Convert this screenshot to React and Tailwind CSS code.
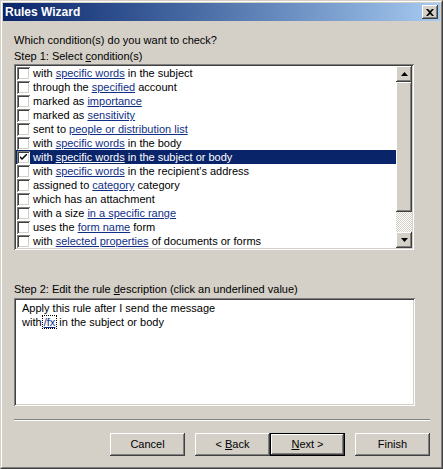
import React from 'react';

const raised =
  'shadow-[inset_-1px_-1px_#404040,inset_1px_1px_#ffffff,inset_-2px_-2px_#808080,inset_2px_2px_#d4d0c8]';
const sunken =
  'shadow-[inset_1px_1px_#808080,inset_-1px_-1px_#ffffff,inset_2px_2px_#404040,inset_-2px_-2px_#d4d0c8]';

const conditions = [
  ['with ', 'specific words', ' in the subject'],
  ['through the ', 'specified', ' account'],
  ['marked as ', 'importance', ''],
  ['marked as ', 'sensitivity', ''],
  ['sent to ', 'people or distribution list', ''],
  ['with ', 'specific words', ' in the body'],
  ['with ', 'specific words', ' in the subject or body'],
  ['with ', 'specific words', " in the recipient's address"],
  ['assigned to ', 'category', ' category'],
  ['which has an attachment', '', ''],
  ['with a size ', 'in a specific range', ''],
  ['uses the ', 'form name', ' form'],
  ['with ', 'selected properties', ' of documents or forms'],
];

const Checkbox = ({ checked }) => (
  <div className={`w-[13px] h-[13px] shrink-0 bg-white ${sunken} flex items-center justify-center`}>
    {checked && (
      <svg width="7" height="7" viewBox="0 0 7 7">
        <path d="M0 2 L0 4 L2 6 L7 1 L7 -1 L2 4 Z" fill="#000" />
      </svg>
    )}
  </div>
);

const Button = ({ children, isDefault }) => (
  <button
    type="button"
    className={`w-[75px] h-[23px] bg-[#d4d0c8] text-[11px] text-black flex items-center justify-center ${
      isDefault ? 'border border-black' : ''
    }`}
  >
    <span className={`w-full h-full flex items-center justify-center ${raised}`}>{children}</span>
  </button>
);

const Arrow = ({ up }) => (
  <svg width="7" height="4" viewBox="0 0 7 4">
    <path d={up ? 'M3.5 0 L7 4 L0 4 Z' : 'M0 0 L7 0 L3.5 4 Z'} fill="#000" />
  </svg>
);

export default function App() {
  return (
    <div className="w-[443px] h-[469px] font-['Liberation_Sans',Arial,sans-serif] text-[11px] text-black">
      {/* window frame */}
      <div className="w-full h-full bg-[#d4d0c8] border border-t-[#d4d0c8] border-l-[#d4d0c8] border-r-[#404040] border-b-[#404040]">
        <div className="w-full h-full border border-t-white border-l-white border-r-[#808080] border-b-[#808080] p-px flex flex-col">
          {/* Title bar */}
          <div className="h-[18px] shrink-0 bg-gradient-to-r from-[#0a246a] to-[#a6caf0] flex items-center justify-between pl-[2px] pr-[2px]">
            <span className="text-white font-bold text-[12px] leading-[18px]">Rules Wizard</span>
            <div className={`w-[16px] h-[14px] bg-[#d4d0c8] ${raised} flex items-center justify-center`}>
              <svg width="8" height="7" viewBox="0 0 8 7">
                <path d="M0 0 H2 L4 2 L6 0 H8 L5 3.5 L8 7 H6 L4 5 L2 7 H0 L3 3.5 Z" fill="#000" />
              </svg>
            </div>
          </div>

          {/* Content */}
          <div className="flex-1 flex flex-col pl-[11px] pr-[10px]">
            <div className="mt-[11px] leading-[16px]">Which condition(s) do you want to check?</div>
            <div className="leading-[16px]">
              Step 1: Select <span className="underline">c</span>ondition(s)
            </div>

            {/* Conditions list */}
            <div className={`w-[400px] h-[186px] bg-white ${sunken} p-[2px] flex`}>
              <div className="flex-1 flex flex-col">
                {conditions.map(([pre, link, post], idx) => {
                  const selected = idx === 6;
                  return (
                    <div
                      key={`cond-${idx}`}
                      className={`h-[14px] flex items-center pl-px gap-[2px] whitespace-nowrap leading-[14px] ${
                        selected ? 'bg-[#0a246a] text-white' : ''
                      }`}
                    >
                      <Checkbox checked={selected} />
                      <span className="pl-px">
                        {pre}
                        {link && (
                          <span className={`underline ${selected ? 'text-white' : 'text-[#0f2f86]'}`}>{link}</span>
                        )}
                        {post}
                      </span>
                    </div>
                  );
                })}
              </div>

              {/* Scrollbar */}
              <div className="w-[16px] flex flex-col">
                <div className={`h-[16px] bg-[#d4d0c8] ${raised} flex items-center justify-center`}>
                  <Arrow up />
                </div>
                <div className={`h-[130px] bg-[#d4d0c8] ${raised}`} />
                <div className="h-[20px] bg-[repeating-conic-gradient(#ffffff_0_25%,#d4d0c8_0_50%)] bg-[length:2px_2px]" />
                <div className={`h-[16px] bg-[#d4d0c8] ${raised} flex items-center justify-center`}>
                  <Arrow />
                </div>
              </div>
            </div>

            <div className="mt-[31px] leading-[16px]">
              Step 2: Edit the rule <span className="underline">d</span>escription (click an underlined value)
            </div>

            {/* Description box */}
            <div className={`mt-px w-[401px] h-[108px] bg-white ${sunken} pt-[3px] pl-[8px] leading-[14px]`}>
              <div>Apply this rule after I send the message</div>
              <div>
                with{' '}
                <span className="text-[#0f2f86] underline outline-1 outline-dotted outline-black px-px -ml-[2px]">/fx</span>
                {' '}in the subject or body
              </div>
            </div>

            {/* Separator */}
            <div className="mt-[13px] h-[2px] border-t border-t-[#808080] border-b border-b-white" />

            {/* Buttons */}
            <div className="mt-[12px] flex justify-end">
              <Button>Cancel</Button>
              <div className="w-[10px]" />
              <Button>
                &lt; <span className="underline ml-[3px]">B</span>ack
              </Button>
              <Button isDefault>
                <span className="underline">N</span>ext &gt;
              </Button>
              <div className="w-[10px]" />
              <Button>Finish</Button>
            </div>
          </div>
        </div>
      </div>
    </div>
  );
}
